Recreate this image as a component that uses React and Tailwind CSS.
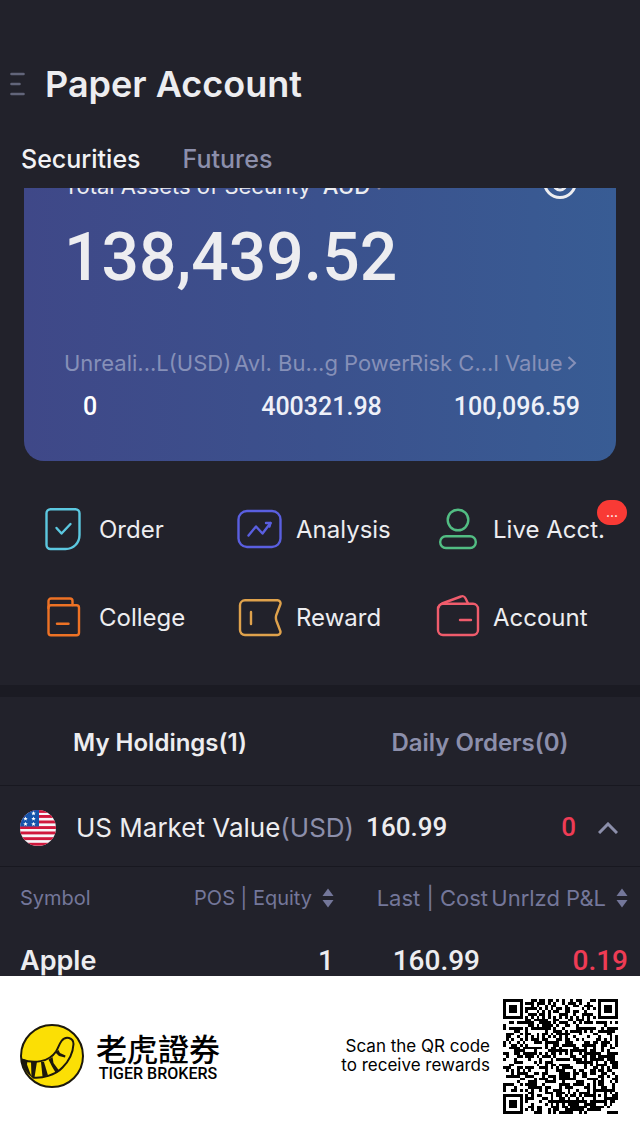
import { useState } from "react";

const stroke = {
  fill: "none",
  strokeWidth: 2.4,
  strokeLinecap: "round",
  strokeLinejoin: "round",
};

function OrderIcon() {
  return (
    <svg viewBox="0 0 48 48" className="size-12 shrink-0" {...stroke} stroke="#5cc8e0">
      <path d="M11.500 4.200h25a4 4 0 0 1 4 4V30c0 8-6 14-14 14h-15a4 4 0 0 1-4-4V8.200a4 4 0 0 1 4-4z" />
      <path d="M17.500 23l5 5.500 9-9.500" />
    </svg>
  );
}

function AnalysisIcon() {
  return (
    <svg viewBox="0 0 48 48" className="size-12 shrink-0" {...stroke} stroke="#5a5fe0">
      <rect x="2.500" y="6" width="42" height="36" rx="8.500" />
      <path d="M12.500 30.500l7.500-9 6.500 7 8-10.500" />
      <path d="M30 18h4.500l-1 3.500" />
    </svg>
  );
}

function LiveIcon() {
  return (
    <svg viewBox="0 0 48 48" className="size-12 shrink-0" {...stroke} stroke="#52bd83">
      <circle cx="25" cy="15" r="10.300" />
      <rect x="7.200" y="31.200" width="35.600" height="11.800" rx="5.700" />
    </svg>
  );
}

function CollegeIcon() {
  return (
    <svg viewBox="0 0 48 48" className="size-12 shrink-0" {...stroke} stroke="#ee7225">
      <path d="M33.500 12V8a2.500 2.500 0 0 0-2.500-2.500H12a2.500 2.500 0 0 0-2.500 2.500v7" />
      <rect x="9.500" y="12.300" width="30.500" height="30" rx="2.500" />
      <path d="M18 30.800h11.500" />
    </svg>
  );
}

function RewardIcon() {
  return (
    <svg viewBox="0 0 48 48" className="size-12 shrink-0" {...stroke} stroke="#dfa24c">
      <path d="M9 7.300h32.500a3 3 0 0 1 2.900 3.900l-4 10.500a9 9 0 0 0 0 6l4 10.500A3 3 0 0 1 41.500 42H9a5 5 0 0 1-5-5V12.300a5 5 0 0 1 5-5z" />
      <path d="M15 19v12" />
    </svg>
  );
}

function AccountIcon() {
  return (
    <svg viewBox="0 0 48 48" className="size-12 shrink-0" {...stroke} stroke="#f05c6c">
      <rect x="5" y="10.800" width="40" height="31.200" rx="5" />
      <path d="M5.500 14.500c.5-2 1.500-3.200 3.500-4L28 3.500a3.500 3.500 0 0 1 4.500 1.800l2.500 5.200" />
      <path d="M27 27h11" />
    </svg>
  );
}

const MENU = [
  { label: "Order", Icon: OrderIcon },
  { label: "Analysis", Icon: AnalysisIcon },
  { label: "Live Acct.", Icon: LiveIcon, badge: "..." },
  { label: "College", Icon: CollegeIcon },
  { label: "Reward", Icon: RewardIcon },
  { label: "Account", Icon: AccountIcon },
];

const STRIPES = [0.5, 5.5, 11, 16.6, 22, 27.7, 33.3];
const STARS = [[13.5, 3.3], [5.5, 8.6], [13.5, 8.6], [5.5, 14], [13.5, 14]];

function UsFlag() {
  return (
    <svg viewBox="0 0 36 36" className="size-9 shrink-0">
      <clipPath id="flag">
        <circle cx="18" cy="18" r="18" />
      </clipPath>
      <g clipPath="url(#flag)">
        <rect width="36" height="36" fill="#f7f5f8" />
        {STRIPES.map((y) => (
          <rect key={y} y={y - 0.5} width="36" height="2.900" fill="#d0173c" />
        ))}
        <rect width="19" height="16.500" fill="#1654ab" />
        {STARS.map(([x, y]) => (
          <path
            key={`${x}-${y}`}
            transform={`translate(${x} ${y})`}
            d="M0-2.200l.6 1.500 1.600.1-1.200 1 .4 1.600L0 1.100l-1.400.9.4-1.600-1.200-1 1.600-.1z"
            fill="#fff"
          />
        ))}
      </g>
    </svg>
  );
}

function SortIcon() {
  return (
    <svg viewBox="0 0 12 20" className="h-5 w-3 shrink-0" fill="#74779a">
      <path d="M6 .5l5.500 7.500H.5z" />
      <path d="M6 19.500l5.500-7.500H.5z" />
    </svg>
  );
}

function TigerLogo() {
  return (
    <svg viewBox="0 0 64 64" className="size-16 shrink-0">
      <circle cx="32" cy="32" r="31" fill="#fbdf05" stroke="#1c180c" strokeWidth="2" />
      {/* tail */}
      <path
        d="M1.500 35.500C14 40 29 38 36 27.500c2.500-4 3-7 5.500-10.500 4-5.500 12-3.500 12 3-.5 9-4.500 17-11 23.500C35 51.500 22 54.500 12.500 53.500"
        fill="none"
        stroke="#1c180c"
        strokeWidth="2"
      />
      {/* stripes */}
      <g fill="#1c180c">
        <path d="M1.200 34.500l6.300 2-.5 4 3.500 9.500 2.500 4C6 49 1.500 42 1.200 34.500z" />
        <path d="M11 37.500h6l-2.500 16h-3z" />
        <path d="M21 38h3l4 13.500-5.500 1z" />
        <path d="M28.500 35.500l4-2.500 1 6 5.500 7.500-3.500 2-3.500-6z" />
        <path d="M35.500 28.500l3-2.500 1.500 3 5.500 2.500-.5 2-6-1.500z" />
      </g>
    </svg>
  );
}

const QR_SIZE = 41;

// null when the module belongs to the data area
function finderModule(x, y, cx, cy) {
  const d = Math.max(Math.abs(x - cx), Math.abs(y - cy));
  return d > 4 ? null : d === 3 || d <= 1;
}

function buildQr() {
  let seed = 20117;
  let path = "";
  for (let y = 0; y < QR_SIZE; y++) {
    for (let x = 0; x < QR_SIZE; x++) {
      seed ^= seed << 13;
      seed ^= seed >>> 17;
      seed ^= seed << 5;
      let on = (seed >>> 0) / 4294967296 < 0.52;
      if (x === 6 || y === 6) on = (x + y) % 2 === 0;
      const align = Math.max(Math.abs(x - 34), Math.abs(y - 34));
      if (align <= 2) on = align !== 1;
      on =
        finderModule(x, y, 3, 3) ??
        finderModule(x, y, QR_SIZE - 4, 3) ??
        finderModule(x, y, 3, QR_SIZE - 4) ??
        on;
      if (on) path += `M${x} ${y}h1v1h-1z`;
    }
  }
  return path;
}

function QrCode() {
  return (
    <svg viewBox="0 0 41 41" className="size-[115px] shrink-0" shapeRendering="crispEdges" role="img" aria-label="QR code">
      <path d={buildQr()} fill="#000" />
    </svg>
  );
}

export default function App() {
  const [account, setAccount] = useState("Securities");
  const [list, setList] = useState("holdings");

  return (
    <div className="h-screen flex flex-col bg-[#22222b] text-[#ededf0] font-['Inter',sans-serif]">
      <header className="shrink-0 h-[188px] pt-14">
        <div className="flex items-center h-14 pl-[10px] gap-5">
          <button aria-label="Menu">
            <svg viewBox="0 0 15 24" className="w-[15px] h-6" stroke="#62657a" strokeWidth="2.600" strokeLinecap="round">
              <path d="M1.500 2h12M1.500 12h8M1.500 22h12" />
            </svg>
          </button>
          <h1 className="text-[36px] font-semibold">Paper Account</h1>
        </div>
        <nav className="flex gap-[42px] pl-[21px] pt-[29px] text-[25px] leading-9 font-medium">
          {["Securities", "Futures"].map((name) => (
            <button
              key={name}
              onClick={() => setAccount(name)}
              className={account === name ? "text-[#f2f2f5]" : "text-[#8c8fab]"}
            >
              {name}
            </button>
          ))}
        </nav>
      </header>

      <main className="flex-1 min-h-0 overflow-hidden">
        {/* summary card, scrolled partly under the header */}
        <section className="mx-6 -mt-10 h-[313px] pl-10 pr-9 pt-4 rounded-[20px] bg-linear-to-r from-[#3f4888] via-[#3b518d] to-[#385c94]">
          <div className="flex h-10 text-[22px] leading-11">
            <span>Total Assets of Security</span>
            <button className="ml-3 flex items-center gap-1 h-11 font-medium">
              AUD
              <svg viewBox="0 0 10 10" className="size-[10px]" fill="#8f8a9e">
                <path d="M0 3h10L5 9z" />
              </svg>
            </button>
            <button aria-label="Show amounts" className="ml-auto mr-[2px] h-9">
              <svg viewBox="0 0 36 36" className="size-9" fill="none" stroke="#ededf0" strokeWidth="3">
                <circle cx="18" cy="18" r="15.500" />
                <circle cx="18" cy="20" r="6" />
              </svg>
            </button>
          </div>
          <p className="mt-[14px] h-20 leading-20 text-[66px] font-medium font-['Roboto',sans-serif]">138,439.52</p>
          <dl className="mt-[49px] flex whitespace-nowrap text-[22px] leading-8">
            <div className="w-[170px] shrink-0">
              <dt className="text-[#8690b8]">Unreali...L(USD)</dt>
              <dd className="mt-[10px] pl-[19px] text-[25px] leading-9 font-medium text-white font-['Roboto',sans-serif]">0</dd>
            </div>
            <div className="w-[175px] shrink-0">
              <dt className="text-[#8690b8]">Avl. Bu...g Power</dt>
              <dd className="mt-[10px] text-center text-[25px] leading-9 font-medium text-[#eef0f8] font-['Roboto',sans-serif]">400321.98</dd>
            </div>
            <div className="flex-1">
              <dt className="flex items-center gap-1 text-[#8690b8]">
                Risk C...l Value
                <svg viewBox="0 0 10 16" className="w-[10px] h-4" fill="none" stroke="#8690b8" strokeWidth="2">
                  <path d="M1.500 2l6.500 6-6.500 6" />
                </svg>
              </dt>
              <dd className="mt-[10px] text-right text-[25px] leading-9 font-medium text-[#eef0f8] font-['Roboto',sans-serif]">100,096.59</dd>
            </div>
          </dl>
        </section>

        <section className="grid grid-cols-3 pl-[39px] pr-[10px] py-6 text-[24px]">
          {MENU.map(({ label, Icon, badge }) => (
            <button key={label} className="relative flex items-center gap-3 h-22 whitespace-nowrap">
              <Icon />
              <span className="pt-[2px]">{label}</span>
              {badge && (
                <span className="absolute right-[3px] top-[15px] w-[30px] h-[25px] rounded-full bg-[#f93a35] text-[14px] leading-6 text-center text-white">
                  {badge}
                </span>
              )}
            </button>
          ))}
        </section>

        <div className="h-3 bg-[#1b1b23]" />

        <div className="grid grid-cols-2 h-[89px] pt-[3px] border-b border-[#181820] text-[24px] font-semibold">
          <button onClick={() => setList("holdings")} className={list === "holdings" ? "" : "text-[#8c8fab]"}>
            My Holdings(1)
          </button>
          <button onClick={() => setList("orders")} className={list === "orders" ? "" : "text-[#8c8fab]"}>
            Daily Orders(0)
          </button>
        </div>

        <div className="flex items-center h-[81px] pt-[3px] pl-5 pr-[22px] border-b border-[#181820] text-[26px]">
          <UsFlag />
          <span className="ml-5">
            US Market Value<span className="text-[#8c8fab]">(USD)</span>
          </span>
          <span className="ml-3 text-[26px] font-medium font-['Roboto',sans-serif]">160.99</span>
          <span className="ml-auto text-[26px] font-medium text-[#ef3c55] font-['Roboto',sans-serif]">0</span>
          <button aria-label="Collapse" className="ml-[22px]">
            <svg viewBox="0 0 20 12" className="w-5 h-3" fill="none" stroke="#8c8fab" strokeWidth="3">
              <path d="M1 11l9-9 9 9" />
            </svg>
          </button>
        </div>

        <table className="w-full table-fixed whitespace-nowrap">
          <thead className="text-[#74779a]">
            <tr className="h-[62px]">
              <th className="pl-5 text-left font-normal text-[20px]">Symbol</th>
              <th className="w-[174px] font-normal text-[20px]">
                <button className="flex items-center justify-end gap-[10px] w-full">POS | Equity <SortIcon /></button>
              </th>
              <th className="w-[154px] text-right font-normal text-[22px]">Last | Cost</th>
              <th className="w-[152px] pr-3 font-normal text-[22px]">
                <button className="flex items-center justify-end gap-[10px] w-full">Unrlzd P&amp;L <SortIcon /></button>
              </th>
            </tr>
          </thead>
          <tbody>
            <tr className="h-16 text-right text-[28px] font-medium font-['Roboto',sans-serif]">
              <td className="pl-5 text-left text-[27px] font-semibold font-['Inter',sans-serif]">Apple</td>
              <td>1</td>
              <td className="pr-2">160.99</td>
              <td className="pr-3 text-[#ef3c55]">0.19</td>
            </tr>
          </tbody>
        </table>
      </main>

      <footer className="shrink-0 flex items-center h-40 pl-5 pr-[22px] bg-white text-black">
        <TigerLogo />
        <div className="ml-3">
          <p className="text-[31px] leading-9 font-medium font-['Noto_Sans_CJK_TC',sans-serif]">老虎證券</p>
          <p className="text-center text-[16px] leading-4 font-medium font-['Roboto',sans-serif]">TIGER BROKERS</p>
        </div>
        <p className="ml-auto mr-[13px] text-right text-[17px] leading-[19px]">
          Scan the QR code
          <br />
          to receive rewards
        </p>
        <QrCode />
      </footer>
    </div>
  );
}
